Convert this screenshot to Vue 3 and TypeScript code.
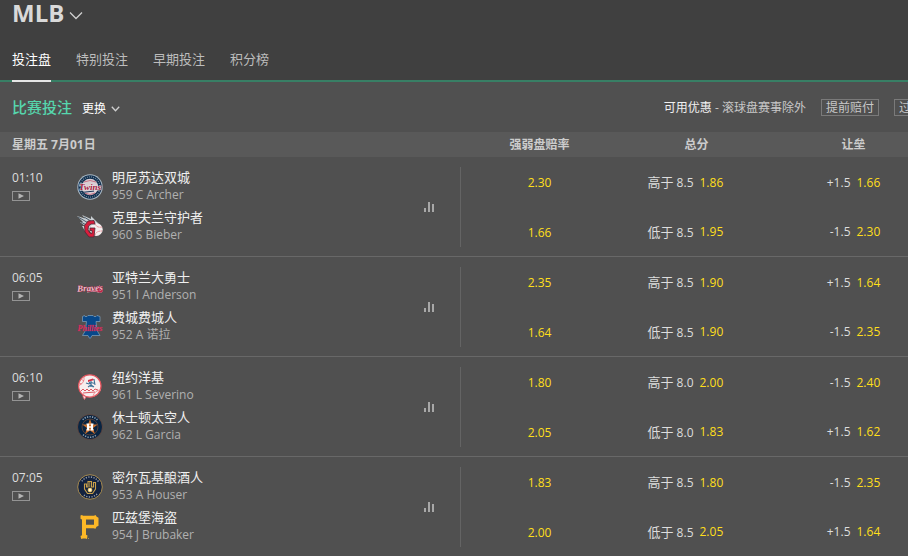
<script setup lang="ts">
interface Team {
  name: string
  pitcher: string
  logo: string
  money: string
  total: string
  totalOdds: string
  line: string
  lineOdds: string
}

interface Fixture {
  time: string
  teams: Team[]
}

const tabs: string[] = ['投注盘', '特别投注', '早期投注', '积分榜']
const offers: string[] = ['提前赔付', '过关投注']

function team(
  name: string, pitcher: string, logo: string, money: string,
  total: string, totalOdds: string, line: string, lineOdds: string,
): Team {
  return { name, pitcher, logo, money, total, totalOdds, line, lineOdds }
}

const fixtures: Fixture[] = [
  {
    time: '01:10',
    teams: [
      team('明尼苏达双城', '959 C Archer', 'twins', '2.30', '8.5', '1.86', '+1.5', '1.66'),
      team('克里夫兰守护者', '960 S Bieber', 'guardians', '1.66', '8.5', '1.95', '-1.5', '2.30'),
    ],
  },
  {
    time: '06:05',
    teams: [
      team('亚特兰大勇士', '951 I Anderson', 'braves', '2.35', '8.5', '1.90', '+1.5', '1.64'),
      team('费城费城人', '952 A 诺拉', 'phillies', '1.64', '8.5', '1.90', '-1.5', '2.35'),
    ],
  },
  {
    time: '06:10',
    teams: [
      team('纽约洋基', '961 L Severino', 'yankees', '1.80', '8.0', '2.00', '-1.5', '2.40'),
      team('休士顿太空人', '962 L Garcia', 'astros', '2.05', '8.0', '1.83', '+1.5', '1.62'),
    ],
  },
  {
    time: '07:05',
    teams: [
      team('密尔瓦基酿酒人', '953 A Houser', 'brewers', '1.83', '8.5', '1.80', '-1.5', '2.35'),
      team('匹兹堡海盗', '954 J Brubaker', 'pirates', '2.00', '8.5', '2.05', '+1.5', '1.64'),
    ],
  },
]
</script>

<template>
  <main class="page">
    <header class="top">
      <h1>
        <button class="league" type="button">
          <span>MLB</span>
          <svg class="chev-lg" width="14" height="9" viewBox="0 0 14 9" aria-hidden="true"><path d="M1 1.5 7 7.5l6-6" /></svg>
        </button>
      </h1>
      <nav class="tabs">
        <a v-for="(tab, i) in tabs" :key="tab" href="#" :class="{ active: i === 0 }">{{ tab }}</a>
      </nav>
    </header>

    <section class="market-bar">
      <h2>比赛投注</h2>
      <button class="switch" type="button">
        <span>更换</span>
        <svg width="9" height="6" viewBox="0 0 9 6" aria-hidden="true"><path d="M.8.8l3.7 4 3.7-4" /></svg>
      </button>
      <p class="promo"><strong>可用优惠</strong> - 滚球盘赛事除外</p>
      <button v-for="offer in offers" :key="offer" class="offer" type="button">{{ offer }}</button>
    </section>

    <table class="board">
      <colgroup>
        <col class="col-fixture" />
        <col /><col /><col />
      </colgroup>
      <thead>
        <tr>
          <th scope="col" class="day">星期五 7月01日</th>
          <th scope="col">强弱盘赔率</th>
          <th scope="col">总分</th>
          <th scope="col">让垒</th>
        </tr>
      </thead>
      <tbody>
        <tr v-for="fx in fixtures" :key="fx.teams[0].pitcher">
          <td>
            <div class="fixture">
              <div class="when">
                <time>{{ fx.time }}</time>
                <svg width="18" height="10" viewBox="0 0 18 10" aria-hidden="true">
                  <rect x=".5" y=".5" width="17" height="9" fill="none" stroke="#949494" />
                  <path d="M6.5 2.2v5.6L12 5z" fill="#b4b4b4" />
                </svg>
              </div>
              <div class="teams">
                <div v-for="t in fx.teams" :key="t.name" class="team">
                  <svg v-if="t.logo === 'twins'" class="logo" viewBox="0 0 26 26" aria-hidden="true">
                    <circle cx="13" cy="13" r="12.7" fill="#a9b8c4" />
                    <circle cx="13" cy="13" r="11.7" fill="#12304f" />
                    <circle cx="13" cy="13" r="10.1" fill="none" stroke="#6f879c" stroke-width="1.3" stroke-dasharray="1 1.1" />
                    <circle cx="13" cy="13" r="8.3" fill="#d9cdd3" />
                    <path d="M7 8q6-3 12 0M8 19q5 3 10 0" fill="none" stroke="#c35b70" stroke-width=".8" />
                    <text x="13" y="16" text-anchor="middle" font-family="Liberation Serif" font-size="9" font-weight="700" font-style="italic" fill="#a81840" stroke="#e8dfe2" stroke-width=".8" paint-order="stroke">Twins</text>
                    <path d="M6 18.3l11-1.2" stroke="#17385b" stroke-width="1" />
                  </svg>
                  <svg v-else-if="t.logo === 'guardians'" class="logo" viewBox="0 0 26 26" aria-hidden="true">
                    <path d="M0 2l8 2.500L5 1l9 4 0-3 7 7-5 7-8 1-3-5 3 0-5-4 3 0z" fill="#c8ced2" />
                    <path d="M1 3l12 7M7 3l10 6M4 8l7 4" stroke="#3d4e5e" stroke-width=".9" />
                    <circle cx="19.300" cy="15.500" r="6.400" fill="#f4eeee" />
                    <path d="M18 10q2 4 7 3M18 21q1-4 7-4" fill="none" stroke="#e35b66" stroke-width=".8" stroke-dasharray="1 .5" />
                    <path d="M17 6.500l-6 .5-3.500 4.500L8 18l4 5h5l1-9h-5v2.500h2v3l-2-.5-2-3 .5-4 2.500-2h4z" fill="#d91e3c" stroke="#4e2735" stroke-width=".8" />
                  </svg>
                  <svg v-else-if="t.logo === 'braves'" class="logo" viewBox="0 0 26 26" aria-hidden="true">
                    <path d="M10 17.500q7-1.500 12 0" fill="none" stroke="#efbdc7" stroke-width="2.200" />
                    <path d="M10 17.500q7-1.500 12 0" fill="none" stroke="#9e2746" stroke-width="1" />
                    <path d="M20 15q2-1 2.500-3.500L25 14q2 3-.5 4.500l-4-.5z" fill="#bd1c42" stroke="#e38397" stroke-width=".5" />
                    <text x="0" y="17" font-family="Liberation Serif" font-size="9" font-weight="700" font-style="italic" fill="#efbdc7" stroke="#8f2544" stroke-width=".6" paint-order="stroke" transform="rotate(-3 13 13)">Braves</text>
                  </svg>
                  <svg v-else-if="t.logo === 'phillies'" class="logo" viewBox="0 0 26 26" aria-hidden="true">
                    <path d="M8 2.500h2l1-1h5l1 1h2l1-1 3 1v5h-4l1 9 3 5h-8l-1.500 2.700h-1L11 21.500H5.500l3-5 1-9h-4v-5l2-1z" fill="#07488a" stroke="#80a2bd" stroke-width=".7" />
                    <text x="13" y="16.500" text-anchor="middle" font-family="Liberation Serif" font-size="8" font-weight="700" font-style="italic" fill="#d8315d" stroke="#8d3458" stroke-width=".4" paint-order="stroke">Phillies</text>
                  </svg>
                  <svg v-else-if="t.logo === 'yankees'" class="logo" viewBox="0 0 26 26" aria-hidden="true">
                    <path d="M6 20l3 3-1.500 2.500L6 23z" fill="#f3d8da" stroke="#e4636c" stroke-width=".8" />
                    <circle cx="12.800" cy="12" r="11.200" fill="#f7eeee" stroke="#e5545d" stroke-width="1.200" />
                    <path d="M7 2.800q1 6-5.500 9M16 22q2-6 8-6M4 5l3 2M2 9l3 1" fill="none" stroke="#eb8187" stroke-width=".9" />
                    <path d="M11 6l5-1.500 1 1.500-6 2z" fill="#d52f43" />
                    <path d="M9 9l3 1 2-1.500 4 1M11 13l3-2 3 2M14 7v6M12 8l4 5M17 5l1 6" fill="none" stroke="#3d7096" stroke-width="1.100" />
                    <path d="M4 17l2-2 2 2 2-2 2 2 2-2 2 2 2-2 3 1M6 19l12-1" fill="none" stroke="#dc5862" stroke-width="1" />
                  </svg>
                  <svg v-else-if="t.logo === 'astros'" class="logo" viewBox="0 0 26 26" aria-hidden="true">
                    <circle cx="13" cy="13" r="12.500" fill="#082442" stroke="#724c3c" stroke-width=".7" />
                    <circle cx="13" cy="13" r="10.300" fill="none" stroke="#8d9bab" stroke-width="1.600" stroke-dasharray="1.300 1.200 1.300 1.200 1.300 1.200 1.300 1.200 1.300 1.200 1.300 1.200 1.300 60" transform="rotate(225 13 13)" />
                    <circle cx="13" cy="13" r="10.300" fill="none" stroke="#8d9bab" stroke-width="1.600" stroke-dasharray="1.300 1.200 1.300 1.200 1.300 1.200 1.300 1.200 1.300 1.200 1.300 60" transform="rotate(55 13 13)" />
                    <circle cx="13" cy="13" r="8" fill="none" stroke="#8a512f" stroke-width=".6" />
                    <path d="M13 5l2 5.500h5.700l-4.600 3.500 1.800 6L13 16.500 8.100 20l1.800-6-4.600-3.500H11z" fill="#c9702f" />
                    <path d="M9.500 9.500h3v1.200h-.5v1.600h2v-1.600h-.5V9.500h3v1.200H16v4.600h.5v1.200h-3v-1.200h.5v-1.600h-2v1.600h.5v1.200h-3v-1.200h.5v-4.600h-.5z" fill="#fff" />
                  </svg>
                  <svg v-else-if="t.logo === 'brewers'" class="logo" viewBox="0 0 26 26" aria-hidden="true">
                    <circle cx="13" cy="13" r="12.300" fill="#14233f" stroke="#a98c50" stroke-width="1" />
                    <circle cx="13" cy="13" r="10" fill="none" stroke="#9aa3b1" stroke-width="1.400" stroke-dasharray="1.200 1.400 1.200 1.400 1.200 1.400 1.200 1.400 1.200 1.400 1.200 1.400 1.200 1.400 1.200 60" transform="rotate(215 13 13)" />
                    <circle cx="13" cy="13" r="10" fill="none" stroke="#9aa3b1" stroke-width="1.400" stroke-dasharray="1.200 1.400 1.200 1.400 1.200 1.400 1.200 1.400 1.200 1.400 1.200 60" transform="rotate(45 13 13)" />
                    <path d="M7.500 10v5l3 4.500h5l3-4.500V8.500h-2V13h-2V7.500h-3.500V13H9.500v-3z" fill="#14233f" stroke="#c9a04a" stroke-width="1.100" />
                    <path d="M12.700 7.500V13" stroke="#c9a04a" stroke-width=".7" />
                    <circle cx="13" cy="16" r="2" fill="#fff5d7" stroke="#ffc52f" stroke-width=".6" />
                  </svg>
                  <svg v-else class="logo" viewBox="0 0 26 26" aria-hidden="true">
                    <path d="M3.500 1.500l1.500-.5 1 .7h11l1.500-.7 1.200 1.800 1.800 1v8l-2 1-1 2-2-.5H9v6.500l1.500.700-.5 3.500-1.500-.5H6l-1.800.5L3.500 22l1.500-.8V5.500l-1.500-.7zM9 5.500v5.200h8V5.500z" fill="#fdb827" fill-rule="evenodd" />
                    <circle cx="11.500" cy="24.500" r=".5" fill="#d4a43f" />
                  </svg>
                  <div class="names">
                    <span class="name">{{ t.name }}</span>
                    <span class="pitcher">{{ t.pitcher }}</span>
                  </div>
                </div>
              </div>
              <button class="stats" type="button" aria-label="统计">
                <svg width="10" height="10" viewBox="0 0 10 10" aria-hidden="true">
                  <path d="M0 6h2v4H0zM4 0h2v10H4zM8 2h2v8H8z" fill="#a8a8a8" />
                </svg>
              </button>
            </div>
          </td>
          <td>
            <div class="odds">
              <button v-for="t in fx.teams" :key="t.name" type="button" class="single">{{ t.money }}</button>
            </div>
          </td>
          <td>
            <div class="odds">
              <button v-for="(t, i) in fx.teams" :key="t.name" type="button" class="pair">
                <span class="handicap"><span class="side">{{ i === 0 ? '高于' : '低于' }}</span> {{ t.total }}</span>
                <span class="price">{{ t.totalOdds }}</span>
              </button>
            </div>
          </td>
          <td>
            <div class="odds">
              <button v-for="t in fx.teams" :key="t.name" type="button" class="pair">
                <span class="handicap">{{ t.line }}</span>
                <span class="price">{{ t.lineOdds }}</span>
              </button>
            </div>
          </td>
        </tr>
      </tbody>
    </table>
  </main>
</template>

<style>
body {
  background: #505050;
}
</style>

<style scoped>
.page {
  overflow: hidden;
  background: #505050;
  color: #ddd;
  font-family: "Open Sans", "Noto Sans CJK SC", sans-serif;
  font-size: 12px;
}

h1, h2, p {
  margin: 0;
}

button {
  margin: 0;
  padding: 0;
  border: 0;
  background: none;
  color: inherit;
  font: inherit;
  cursor: pointer;
}

.top {
  padding: 0 12px;
  background: #404040;
  border-bottom: 2px solid #387f65;
}

h1 {
  font-size: 24px;
}

.league {
  display: flex;
  align-items: center;
  gap: 5px;
  height: 26px;
  color: #d9d9d9;
  font-size: 24px;
  font-weight: 700;
  line-height: 26px;
}

.chev-lg {
  margin-top: 4px;
}

.league svg, .switch svg {
  fill: none;
  stroke: #d0d0d0;
  stroke-width: 1.3;
}

.tabs {
  display: flex;
  gap: 25px;
  margin-bottom: -2px;
  padding-top: 18px;
}

.tabs a {
  padding-bottom: 6px;
  border-bottom: 2px solid transparent;
  color: #bdbdbd;
  font-size: 13px;
  line-height: 30px;
  text-decoration: none;
}

.tabs .active {
  border-color: #e6e6e6;
  color: #fff;
}

.market-bar {
  display: flex;
  align-items: center;
  width: calc(100% + 44px);
  height: 50px;
  box-sizing: border-box;
  padding-left: 12px;
  white-space: nowrap;
}

.market-bar h2 {
  color: #56d6ad;
  font-size: 15px;
  font-weight: 500;
  line-height: 20px;
}

.switch {
  display: flex;
  align-items: center;
  gap: 5px;
  margin-left: 10px;
  padding-top: 2px;
  color: #fff;
}

.switch svg {
  margin-top: 2px;
}

.promo {
  margin-left: auto;
  color: #c8c8c8;
}

.promo strong {
  color: #f0f0f0;
  font-weight: 400;
}

.offer {
  margin-left: 15px;
  padding: 0 4px;
  border: 1px solid #7a7a7a;
  color: #c8c8c8;
  line-height: 15px;
}

.board {
  width: calc(100% + 24px);
  table-layout: fixed;
  border-collapse: separate;
  border-spacing: 0;
}

.col-fixture {
  width: 461px;
}

th {
  height: 25px;
  padding: 0;
  background: #595959;
  color: #ccc;
  font-size: 12px;
  font-weight: 700;
  line-height: 24px;
}

th.day {
  padding-left: 12px;
  text-align: left;
}

td {
  padding: 0;
  border-bottom: 1px solid #686868;
}

tr:last-child td {
  border-bottom: 0;
}

.fixture {
  display: flex;
  padding: 10px 0 9px 12px;
}

.when {
  display: flex;
  flex-direction: column;
  gap: 2px;
  width: 65px;
}

.when time {
  line-height: 22px;
}

.teams {
  flex: 1;
}

.team {
  display: flex;
  align-items: center;
  gap: 9px;
  height: 40px;
}

.logo {
  width: 26px;
  height: 26px;
}

.names {
  display: flex;
  flex-direction: column;
  padding-bottom: 4px;
}

.name {
  color: #f0f0f0;
  font-size: 13px;
  line-height: 20px;
}

.pitcher {
  color: #b0b0b0;
  font-size: 12px;
  line-height: 16px;
}

.stats {
  display: flex;
  align-items: center;
  padding: 0 26px;
  border-right: 1px solid #646464;
}

.odds {
  display: flex;
  flex-direction: column;
  height: 99px;
}

.odds button {
  width: 100%;
  height: 50px;
  padding-top: 2px;
}

.single, .price {
  color: #ffdf1b;
}

.odds .pair {
  display: grid;
  grid-template-columns: 1fr 1fr;
  align-items: center;
  gap: 6px;
  line-height: 20px;
}

.handicap {
  text-align: right;
}

.price {
  text-align: left;
}

.side {
  font-size: 13px;
}
</style>
